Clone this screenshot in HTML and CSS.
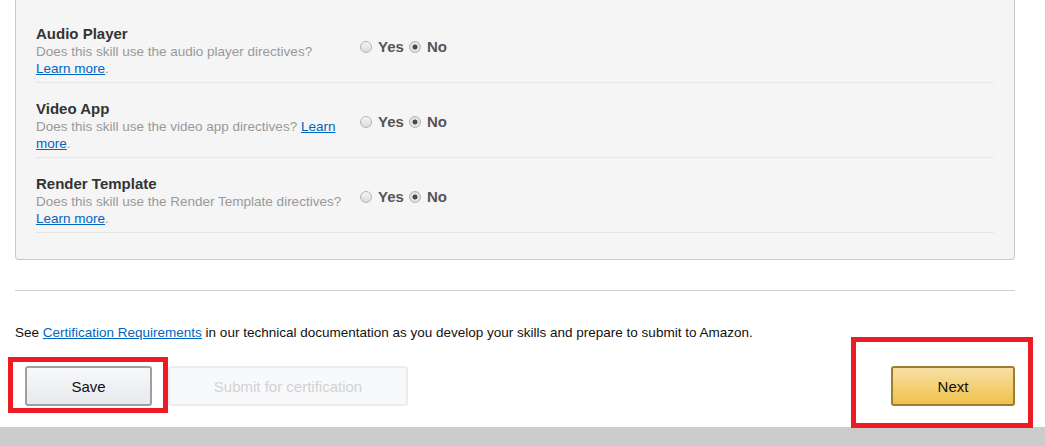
FILE: index.html
```html
<!DOCTYPE html>
<html lang="en">
<head>
<meta charset="utf-8">
<title>Skill Configuration</title>
<link rel="stylesheet" href="styles.css">
</head>
<body>
<div class="page">
  <div class="panel">
    <div class="row">
      <div class="label">
        <div class="title">Audio Player</div>
        <div class="desc">Does this skill use the audio player directives? <a href="#">Learn more</a>.</div>
      </div>
      <div class="choices">
        <label class="choice"><input type="radio" name="audio"> Yes</label>
        <label class="choice"><input type="radio" name="audio" checked> No</label>
      </div>
    </div>
    <div class="row">
      <div class="label">
        <div class="title">Video App</div>
        <div class="desc">Does this skill use the video app directives? <a href="#">Learn more</a>.</div>
      </div>
      <div class="choices">
        <label class="choice"><input type="radio" name="video"> Yes</label>
        <label class="choice"><input type="radio" name="video" checked> No</label>
      </div>
    </div>
    <div class="row">
      <div class="label">
        <div class="title">Render Template</div>
        <div class="desc">Does this skill use the Render Template directives? <a href="#">Learn more</a>.</div>
      </div>
      <div class="choices">
        <label class="choice"><input type="radio" name="render"> Yes</label>
        <label class="choice"><input type="radio" name="render" checked> No</label>
      </div>
    </div>
  </div>

  <hr class="rule">

  <p class="note">See <a href="#">Certification Requirements</a> in our technical documentation as you develop your skills and prepare to submit to Amazon.</p>

  <div class="actions">
    <div class="left-actions">
      <button class="btn btn-save">Save</button>
      <button class="btn btn-disabled" disabled>Submit for certification</button>
    </div>
    <button class="btn btn-next">Next</button>
  </div>
</div>
<div class="footer"></div>

<div class="mark mark-save"></div>
<div class="mark mark-next"></div>
</body>
</html>
```
FILE: styles.css
```css
html, body {
  margin: 0;
  padding: 0;
  background: #fff;
  font-family: "Liberation Sans", Arial, sans-serif;
  color: #111;
}

body {
  position: relative;
  width: 1045px;
  height: 446px;
  overflow: hidden;
}

.page {
  width: 1000px;
  padding-left: 15px;
}

.panel {
  background: #f5f5f5;
  border: 1px solid #c9c9c9;
  border-top: none;
  border-radius: 0 0 4px 4px;
  padding: 8px 20px 26px 20px;
}

.row {
  display: flex;
  align-items: flex-start;
  padding: 17px 0 5px 0;
  border-bottom: 1px solid #e6e6e6;
}

.label {
  width: 310px;
}

.title {
  font-size: 15px;
  line-height: 18px;
  font-weight: bold;
  color: #333;
}

.desc {
  font-size: 13.5px;
  line-height: 17px;
  color: #999;
}

.desc a,
.note a {
  color: #0066c0;
  text-decoration: underline;
}

.choices {
  display: flex;
  align-items: center;
  gap: 5px;
  margin-left: 14px;
  padding-top: 13px;
}

.choice {
  display: flex;
  align-items: center;
  gap: 6px;
  font-size: 15px;
  line-height: 18px;
  font-weight: bold;
  color: #555;
}

.choice input {
  -webkit-appearance: none;
  appearance: none;
  margin: 0;
  width: 12px;
  height: 12px;
  border-radius: 50%;
  border: 1px solid #b5b5b5;
  background: linear-gradient(#f4f4f4, #dcdcdc);
  box-sizing: border-box;
}

.choice input:checked {
  background: radial-gradient(circle, #4a4a4a 0, #4a4a4a 2.2px, #e6e6e6 2.8px, #d8d8d8 100%);
}

.rule {
  margin: 30px 0 0 0;
  border: none;
  border-top: 1px solid #d0d0d0;
  height: 0;
}

.note {
  margin: 33px 0 0 0;
  font-size: 13.5px;
  line-height: 17px;
  color: #111;
}

.actions {
  display: flex;
  justify-content: space-between;
  align-items: center;
  margin-top: 25px;
}

.left-actions {
  display: flex;
  gap: 16px;
  padding-left: 10px;
}

.btn {
  font-family: "Liberation Sans", Arial, sans-serif;
  font-size: 15px;
  height: 40px;
  border-radius: 3px;
  padding: 0;
  box-sizing: border-box;
}

.btn-save {
  width: 127px;
  color: #111;
  border: 2px solid #9d9fa3;
  background: linear-gradient(#f7f8fa, #e7e9ec);
}

.btn-disabled {
  width: 240px;
  color: #d2d2d2;
  border: 2px solid #ececec;
  background: #f8f9fb;
}

.btn-next {
  width: 124px;
  color: #111;
  border: 2px solid #9c7e31;
  background: linear-gradient(#f7dfa5, #f0c14b);
}

.footer {
  position: absolute;
  left: 0;
  top: 427px;
  width: 1045px;
  height: 19px;
  background: #cccccc;
}

.mark {
  position: absolute;
  border: 5px solid #ed1c24;
  box-sizing: border-box;
}

.mark-save {
  left: 8px;
  top: 357px;
  width: 160px;
  height: 56px;
}

.mark-next {
  left: 851px;
  top: 337px;
  width: 182px;
  height: 91px;
}
```
